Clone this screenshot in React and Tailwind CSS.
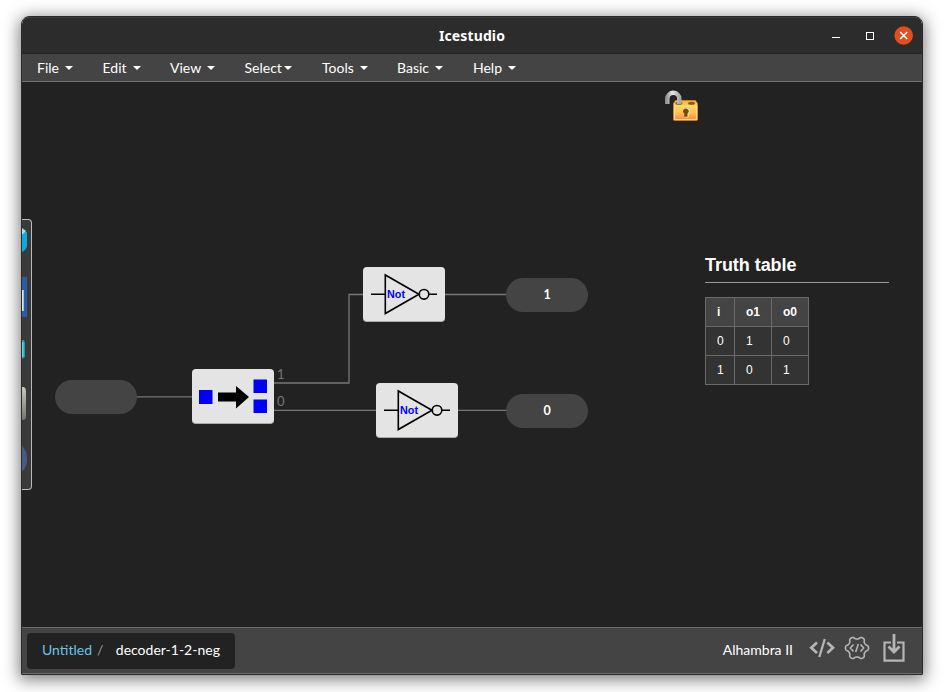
import React from "react";

const menus = [
  { label: "File", gap: "ml-[15px] w-[65.500px]", space: true },
  { label: "Edit", gap: "w-[67.500px]", space: true },
  { label: "View", gap: "w-[74.500px]", space: true },
  { label: "Select", gap: "w-[77.500px]", space: false },
  { label: "Tools", gap: "w-[75px]", space: true },
  { label: "Basic", gap: "w-[76px]", space: true },
  { label: "Help", gap: "w-[60px]", space: true },
];

// Six-lobed gear outline, one lobe every 60 degrees.
const gearPath =
  Array.from({ length: 120 }, (_, i) => {
    const t = (i / 120) * Math.PI * 2;
    const r = 10.3 + 1.35 * Math.tanh(1.6 * Math.cos(6 * t));
    const x = (13 + r * Math.cos(t)).toFixed(2);
    const y = (13 + r * Math.sin(t)).toFixed(2);
    return `${i ? "L" : "M"}${x} ${y}`;
  }).join("") + "Z";

function Caret() {
  return (
    <span className="mt-px h-0 w-0 border-x-4 border-t-4 border-x-transparent border-t-white" />
  );
}

function TitleBar() {
  return (
    <div className="flex h-[37px] shrink-0 items-center border-t border-[#3b3b3b] bg-[#2c2c2c] shadow-[inset_0_-1px_0_#232323]">
      <div className="w-[120px]" />
      <div className="flex-1 text-center font-['Noto_Sans','Open_Sans',sans-serif] text-[14px] leading-[36px] font-bold tracking-[0.12px] text-white">
        Icestudio
      </div>
      <div className="flex w-[120px] items-center justify-end pr-[9px]">
        <span className="mt-[3px] mr-[26px] h-px w-2 bg-white" />
        <span className="-mt-px mr-[20px] h-2 w-2 border border-white" />
        <svg className="-mt-[2px]" width="19" height="19" viewBox="0 0 19 19">
          <circle cx="9.7" cy="9.5" r="9.3" fill="#e34e1c" />
          <path d="M6.200 6l7 7M13.200 6l-7 7" stroke="#fff" strokeWidth="1.5" />
        </svg>
      </div>
    </div>
  );
}

function MenuBar() {
  return (
    <div className="flex h-[28px] shrink-0 items-center border-b border-[#737373] bg-[#444] text-[14px] text-white">
      {menus.map((m) => (
        <div key={m.label} className={`${m.gap} flex items-center whitespace-nowrap`}>
          <span className={m.space ? "mr-1.5" : "mr-[2px]"}>{m.label}</span>
          <Caret />
        </div>
      ))}
    </div>
  );
}

function Wires() {
  return (
    <svg className="absolute inset-0" width="900" height="546" fill="none" stroke="#777" strokeWidth="1.3">
      <path d="M114 314.8H171M251 301H327V212.5H342M251 328.3H355M422 212.5H485M435 328.3H485" />
    </svg>
  );
}

function NotGate({ className }) {
  return (
    <div className={`absolute h-[55px] w-[82px] rounded-[4px] border-b border-[#aaa] bg-[#e4e4e4] ${className}`}>
      <svg width="82" height="54" viewBox="0 0 82 54" fill="none" stroke="#000" strokeWidth="1.6">
        <path d="M8 27.3H22M66 27.3H74M22.3 8V46.500L56 27.3Z" />
        <circle cx="61" cy="27.3" r="4.8" />
        <text x="24" y="31" fill="#0000ff" stroke="none" fontSize="10.5" fontWeight="bold" textLength="18" lengthAdjust="spacingAndGlyphs" className="font-['Liberation_Sans',sans-serif]">
          Not
        </text>
      </svg>
    </div>
  );
}

function Splitter() {
  return (
    <div className="absolute top-[287px] left-[170px] h-[55px] w-[82px] rounded-[4px] border-b border-[#aaa] bg-[#e4e4e4]">
      <svg width="82" height="54" viewBox="0 0 82 54">
        <g fill="#0000fa">
          <rect x="7" y="21" width="13.5" height="14" />
          <rect x="61.5" y="10.5" width="13.5" height="13.5" />
          <rect x="61.5" y="30.5" width="13.5" height="13.5" />
        </g>
        <path d="M26 23.500H44V17L57 28L44 39.500V32.500H26Z" fill="#000" />
      </svg>
    </div>
  );
}

function Port({ className, children }) {
  return (
    <div className={`absolute h-[34px] w-[82px] rounded-full bg-[#444] text-center text-[12.5px] leading-[33px] font-bold text-white ${className}`}>
      {children}
    </div>
  );
}

function Padlock() {
  return (
    <svg className="absolute top-[7px] left-[642px]" width="36" height="34" viewBox="0 0 36 34">
      <defs>
        <linearGradient id="gold" x2="0" y2="1">
          <stop stopColor="#f3b33d" />
          <stop offset=".3" stopColor="#f7d65b" />
          <stop offset=".6" stopColor="#ffc458" />
          <stop offset="1" stopColor="#f98540" />
        </linearGradient>
        <linearGradient id="steel">
          <stop stopColor="#999" />
          <stop offset=".4" stopColor="#e8e8e8" />
          <stop offset="1" stopColor="#aaa" />
        </linearGradient>
      </defs>
      <path d="M11.500 11.500H31.500L33.500 14.500V30.500Q33.500 31.500 32.500 31.500H10.500Q9.500 31.500 9.500 30.500V14.500Z" fill="url(#gold)" stroke="#e68a22" strokeWidth=".7" />
      <path d="M10.500 17H33M10.500 16.500V30.500H32.700V16.500" fill="none" stroke="#ffdf87" strokeWidth=".9" />
      <ellipse cx="15" cy="14.300" rx="3.5" ry="1.5" fill="#8c5a13" />
      <ellipse cx="27.500" cy="14.300" rx="3.500" ry="1.500" fill="#8c5a13" />
      <path d="M5 15V9.800A6 6 0 0 1 17 9.800V15" transform="translate(-1.700)" fill="none" stroke="url(#steel)" strokeWidth="4.400" />
      <path d="M21.500 28.500V24.800A2.800 2.800 0 1 1 24.600 24.500V28.500Z" fill="#ffe6a0" />
      <path d="M20.300 27.800V24.600A2.700 2.700 0 1 1 23.500 24.600V27.800Z" fill="#6e4b18" />
    </svg>
  );
}

function ToolPalette() {
  return (
    <div className="absolute top-[137px] left-0 h-[271px] w-[10px] overflow-hidden rounded-r-[4px] border border-l-0 border-[#bbb] bg-[#3a3a3a]">
      <svg width="9" height="269" viewBox="0 0 9 269">
        <defs>
          <linearGradient id="drive" x2="0" y2="1">
            <stop stopColor="#c4c6bf" />
            <stop offset="1" stopColor="#73766e" />
          </linearGradient>
        </defs>
        <path d="M0 11L5 12V26Q4 30 0 32Z" fill="#0baadf" />
        <path d="M0 8L4 11L1 14H0Z" fill="#a4e2ef" />
        <rect y="57" width="5" height="40" fill="#285ca5" />
        <rect y="70" width="1.700" height="21" fill="#dce5f0" />
        <path d="M0 120H2L3 123V137L0 139Z" fill="#159db5" />
        <rect y="122" width="1.500" height="15" fill="#6fcfe0" />
        <path d="M0 167H2Q4 168 4 171V198Q3 200 0 200Z" fill="url(#drive)" />
        <path d="M0 226Q5 231 5 239T0 252Z" fill="#465c87" />
      </svg>
    </div>
  );
}

function TruthTable() {
  const rows = [
    ["0", "1", "0"],
    ["1", "0", "1"],
  ];
  return (
    <div className="absolute top-[172px] left-[683px] w-[184px] font-['Liberation_Sans',Arial,sans-serif] text-white">
      <h3 className="h-[29px] border-b border-[#999] text-[18px] leading-[22px] font-bold tracking-[-0.05px]">Truth table</h3>
      <table className="mt-[14px] w-[103px] table-fixed border-collapse text-[12px] leading-[16px]">
        <colgroup>
          <col className="w-[29px]" />
          <col className="w-[37px]" />
          <col className="w-[37px]" />
        </colgroup>
        <thead>
          <tr className="h-[29px] bg-[#444]">
            {["i", "o1", "o0"].map((h) => (
              <th key={h} className="border border-[#6a6a6a] p-0 pl-[11px] text-left font-bold">{h}</th>
            ))}
          </tr>
        </thead>
        <tbody>
          {rows.map((r, i) => (
            <tr key={i} className="h-[29px] bg-[#333]">
              {r.map((c, j) => (
                <td key={j} className="border border-[#6a6a6a] p-0 pl-[11px]">{c}</td>
              ))}
            </tr>
          ))}
        </tbody>
      </table>
    </div>
  );
}

function Canvas() {
  return (
    <div className="relative min-h-0 flex-1 overflow-hidden bg-[#222]">
      <Wires />
      <ToolPalette />
      <Padlock />
      <Port className="top-[298px] left-[33px]" />
      <Splitter />
      <span className="absolute top-[285px] left-[255px] text-[13px] leading-[14px] text-[#777]">1</span>
      <span className="absolute top-[312px] left-[255px] text-[13px] leading-[14px] text-[#777]">0</span>
      <NotGate className="top-[185px] left-[341px]" />
      <NotGate className="top-[301px] left-[354px]" />
      <Port className="top-[196px] left-[484px]">1</Port>
      <Port className="top-[312px] left-[484px]">0</Port>
      <TruthTable />
    </div>
  );
}

function Footer() {
  return (
    <div className="flex h-[47px] shrink-0 items-center border-y border-[#6b6b6b] bg-[#444] pl-[5px] text-[14px] text-white">
      <div className="flex h-9 w-[208px] items-center rounded-[4px] bg-[#222] pb-[2px] pl-[15px]">
        <span className="text-[#6cc5e2]">Untitled</span>
        <span className="ml-[5px] text-[#999]">/</span>
        <span className="ml-[12.500px]">decoder-1-2-neg</span>
      </div>
      <div className="ml-auto flex items-center pr-[17.500px]">
        <span className="mr-4 pb-[2px]">Alhambra II</span>
        <svg className="-mt-[5px] mr-[9px]" width="26" height="20" viewBox="0 0 26 20" fill="none" stroke="#b5b5b5" strokeWidth="2.7">
          <path d="M8 4.500L2.300 9.800L8 15M18.300 4.500L24 9.800L18.300 15" />
          <path d="M15.800 1L10.300 19" strokeWidth="2.300" />
        </svg>
        <svg className="-mt-[5px] mr-[12.500px]" width="26" height="26" viewBox="0 0 26 26" fill="none" stroke="#b5b5b5" strokeWidth="1.600" strokeLinejoin="round">
          <path d={gearPath} />
          <path d="M9.500 9.500L6.300 13L9.500 16.500M16.500 9.500L19.700 13L16.500 16.500M14.300 9L11.700 17" />
        </svg>
        <svg className="-mt-[6px]" width="22" height="28" viewBox="0 0 22 28" fill="none" stroke="#b5b5b5" strokeWidth="2.200">
          <path d="M8 8.500H1.500V26.700H20.500V8.500H14" />
          <path d="M11 0V18M5.500 12.500L11 18L16.500 12.500" strokeWidth="2.800" />
        </svg>
      </div>
    </div>
  );
}

export default function App() {
  return (
    <div className="h-[692px] w-[945px] overflow-hidden bg-white pt-4 pl-[21px] font-['Lato',sans-serif]">
      <div className="flex h-[659px] w-[902px] flex-col overflow-hidden rounded-t-[8px] border border-[#2b2b2b] shadow-[0_3px_16px_2px_rgba(0,0,0,0.5)]">
        <TitleBar />
        <MenuBar />
        <Canvas />
        <Footer />
      </div>
    </div>
  );
}
